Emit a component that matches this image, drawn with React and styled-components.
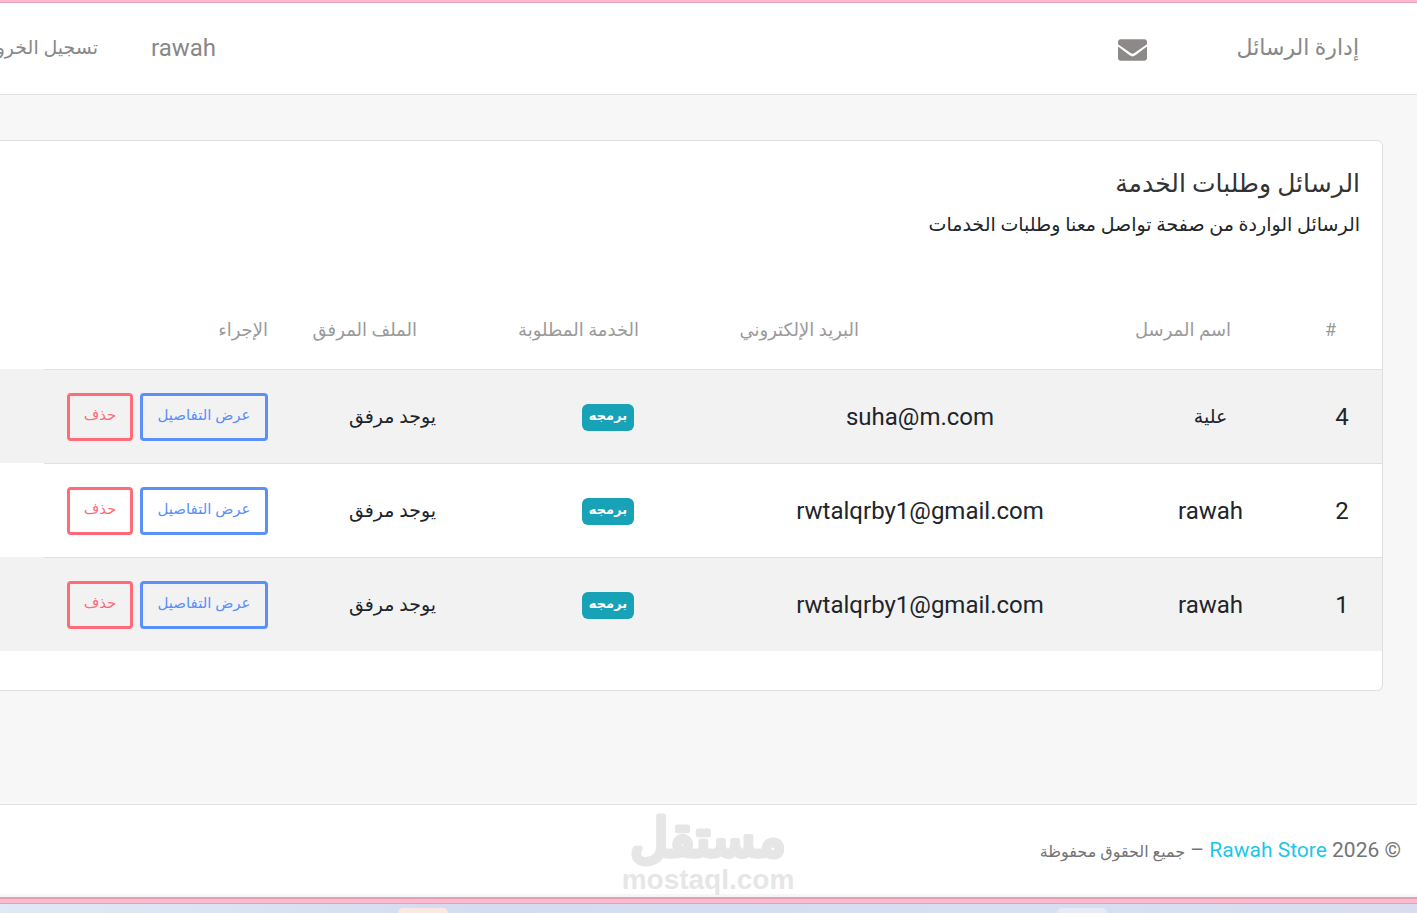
import React from "react";
import styled, { createGlobalStyle } from "styled-components";

const GlobalStyle = createGlobalStyle`
  *, *::before, *::after { box-sizing: border-box; }
  body {
    margin: 0;
    background: #f7f7f7;
    color: #212529;
    font-family: Roboto, "DejaVu Sans", sans-serif;
    overflow: hidden;
  }
`;

const Page = styled.div`
  display: flex;
  flex-direction: column;
  min-height: 100vh;
  border-top: 2px solid #ffb9ce;
  overflow: hidden;
`;

const TopBar = styled.header`
  display: flex;
  align-items: center;
  height: 93px;
  padding: 0 58px 2px 0;
  background: #fff;
  border-top: 1px solid #e3a3b7;
  border-bottom: 1px solid #e3e3e3;
  color: #888;
`;

const Brand = styled.a`
  color: inherit;
  font-size: 22px;
  line-height: 32px;
  text-decoration: none;
  white-space: nowrap;
`;

const MailLink = styled.a`
  display: flex;
  margin-right: 89px;
  padding-top: 4px;
  color: #8d8989;
`;

const Account = styled.nav`
  display: flex;
  align-items: center;
  gap: 53px;
  margin-right: auto;
`;

const UserLink = styled.a`
  color: inherit;
  font-size: 24px;
  line-height: 32px;
  text-decoration: none;
`;

const LogoutLink = styled.a`
  width: 98px;
  color: inherit;
  font-size: 19px;
  line-height: 32px;
  text-decoration: none;
  white-space: nowrap;
`;

const Main = styled.main`
  padding: 45px 34px 113px 0;
`;

const Card = styled.section`
  padding-bottom: 39px;
  background: #fff;
  border: 1px solid #dfdfdf;
  border-left: 0;
  border-radius: 0 6px 6px 0;
`;

const CardHeader = styled.div`
  height: 150px;
  padding: 24px 22px 0 0;
`;

const Title = styled.h4`
  margin: 0;
  color: #333;
  font-size: 25px;
  font-weight: 400;
  line-height: 38px;
`;

const Subtitle = styled.p`
  margin: 0;
  font-size: 19px;
  line-height: 44px;
`;

const Table = styled.table`
  width: 100%;
  table-layout: fixed;
  border-collapse: separate;
  border-spacing: 0;
`;

const Col = styled.col`
  width: ${(p) => p.$w};
`;

const HeadCell = styled.th`
  height: 78px;
  padding: 0 ${(p) => p.$inset}px 2px 0;
  color: #9a9a9a;
  font-size: 18px;
  font-weight: 400;
  text-align: right;
  white-space: nowrap;
`;

const Row = styled.tr`
  height: 94px;
  background: ${(p) => (p.$striped ? "#f2f2f2" : "#fff")};
`;

const Cell = styled.td`
  padding: 0;
  border-top: 1px solid #dee2e6;
  font-size: ${(p) => (p.$arabic ? 19 : 24)}px;
  line-height: 32px;
  text-align: center;
  white-space: nowrap;
`;

const Filler = styled.td`
  padding: 0;
`;

const Badge = styled.span`
  display: inline-block;
  height: 27px;
  padding: 0 7px;
  border-radius: 6px;
  background: #17a2b8;
  color: #fff;
  font-size: 13px;
  font-weight: 700;
  line-height: 24px;
  vertical-align: text-bottom;
`;

const Actions = styled.div`
  display: flex;
  gap: 7px;
  padding-right: 22px;
`;

const ActionButton = styled.button`
  width: ${(p) => p.$w}px;
  height: 48px;
  padding: 0 0 4px;
  border: 3px solid ${(p) => p.$tone};
  border-radius: 4px;
  background: transparent;
  color: ${(p) => p.$tone};
  font-family: inherit;
  font-size: 15px;
`;

const Footer = styled.footer`
  position: relative;
  display: flex;
  align-items: center;
  height: 90px;
  padding-right: 16px;
  background: #fff;
  border-top: 1px solid #e3e3e3;
  color: #747474;
  font-size: 21px;
`;

const Copyright = styled.p`
  margin: 0;
  white-space: pre;
`;

const StoreLink = styled.a`
  color: #1dc7ea;
  text-decoration: none;
`;

const Rights = styled.span`
  font-size: 16px;
`;

const Watermark = styled.svg`
  position: absolute;
  top: 8px;
  left: 50%;
  margin-left: -91px;
  overflow: visible;
  fill: #e6e6e6;
  stroke: #e6e6e6;
  stroke-linecap: round;
  stroke-linejoin: round;
`;

const WindowEdge = styled.div`
  height: 10px;
  border-top: 3px solid #f7f7f7;
  border-bottom: 1px solid #b4b3c9;
  background: linear-gradient(#e0a0b4 2px, #ffb9ce 2px);
`;

const Taskbar = styled.div`
  display: flex;
  flex: 1;
  align-items: flex-end;
  justify-content: space-between;
  min-height: 9px;
  padding: 0 310px 0 398px;
  background: linear-gradient(90deg, #dfeaf5, #d3dcf0 35%, #d5e0f3 75%, #d9dcee);
`;

const TaskButton = styled.div`
  width: 50px;
  height: 5px;
  border-radius: 6px 6px 0 0;
  background: ${(p) => p.$tone};
`;

const columns = [
  { label: "#", width: "80px", inset: 46 },
  { label: "اسم المرسل", width: "183px", inset: 71 },
  { label: "البريد الإلكتروني", width: "398px", inset: 260 },
  { label: "الخدمة المطلوبة", width: "226px", inset: 82 },
  { label: "الملف المرفق", width: "205px", inset: 78 },
  { label: "الإجراء", width: "246px", inset: 22 },
];

const messages = [
  { id: 4, sender: "علية", email: "suha@m.com", arabic: true },
  { id: 2, sender: "rawah", email: "rwtalqrby1@gmail.com" },
  { id: 1, sender: "rawah", email: "rwtalqrby1@gmail.com" },
];

export default function App() {
  return (
    <Page dir="rtl" lang="ar">
      <GlobalStyle />
      <TopBar>
        <Brand href="#messages">إدارة الرسائل</Brand>
        <MailLink href="#inbox" aria-label="الرسائل">
          <svg width="29" height="22" viewBox="0 0 30 22" fill="currentColor">
            <path d="M3 0h24q3 0 3 3v2L17 14q-2 1.500-4 0L0 5V3q0-3 3-3z" />
            <path d="M0 7.500 12 16.500q3 2.200 6 0L30 7.500V19q0 3-3 3H3q-3 0-3-3z" />
          </svg>
        </MailLink>
        <Account>
          <UserLink href="#user">rawah</UserLink>
          <LogoutLink href="#logout">تسجيل الخروج</LogoutLink>
        </Account>
      </TopBar>

      <Main>
        <Card id="messages">
          <CardHeader>
            <Title>الرسائل وطلبات الخدمة</Title>
            <Subtitle>الرسائل الواردة من صفحة تواصل معنا وطلبات الخدمات</Subtitle>
          </CardHeader>
          <Table>
            <colgroup>
              {columns.map((c) => (
                <Col key={c.label} $w={c.width} />
              ))}
              <Col $w="auto" />
            </colgroup>
            <thead>
              <tr>
                {columns.map((c) => (
                  <HeadCell key={c.label} scope="col" $inset={c.inset}>
                    {c.label}
                  </HeadCell>
                ))}
                <Filler />
              </tr>
            </thead>
            <tbody>
              {messages.map((m, i) => (
                <Row key={m.id} $striped={i % 2 === 0}>
                  <Cell>{m.id}</Cell>
                  <Cell $arabic={m.arabic}>{m.sender}</Cell>
                  <Cell>{m.email}</Cell>
                  <Cell>
                    <Badge>برمجه</Badge>
                  </Cell>
                  <Cell $arabic>يوجد مرفق</Cell>
                  <Cell>
                    <Actions>
                      <ActionButton type="button" $w={128} $tone="#5b8ff9">
                        عرض التفاصيل
                      </ActionButton>
                      <ActionButton type="button" $w={66} $tone="#ff6b78">
                        حذف
                      </ActionButton>
                    </Actions>
                  </Cell>
                  <Filler />
                </Row>
              ))}
            </tbody>
          </Table>
        </Card>
      </Main>

      <Footer>
        <Copyright>
          © 2026 <StoreLink href="#store">Rawah Store</StoreLink> –{" "}
          <Rights>جميع الحقوق محفوظة</Rights>
        </Copyright>
        <Watermark width="180" height="84" viewBox="0 0 180 84" textAnchor="middle">
          <text x="90" y="43" fontFamily="DejaVu Sans" fontSize="52" strokeWidth="5">
            مستقل
          </text>
          <text x="90" y="76" fontFamily="Liberation Sans" fontSize="28" fontWeight="700" strokeWidth="0" direction="ltr">
            mostaql.com
          </text>
        </Watermark>
      </Footer>
      <WindowEdge />
      <Taskbar>
        <TaskButton $tone="#e6ebf5" />
        <TaskButton $tone="#fae8e1" />
      </Taskbar>
    </Page>
  );
}
